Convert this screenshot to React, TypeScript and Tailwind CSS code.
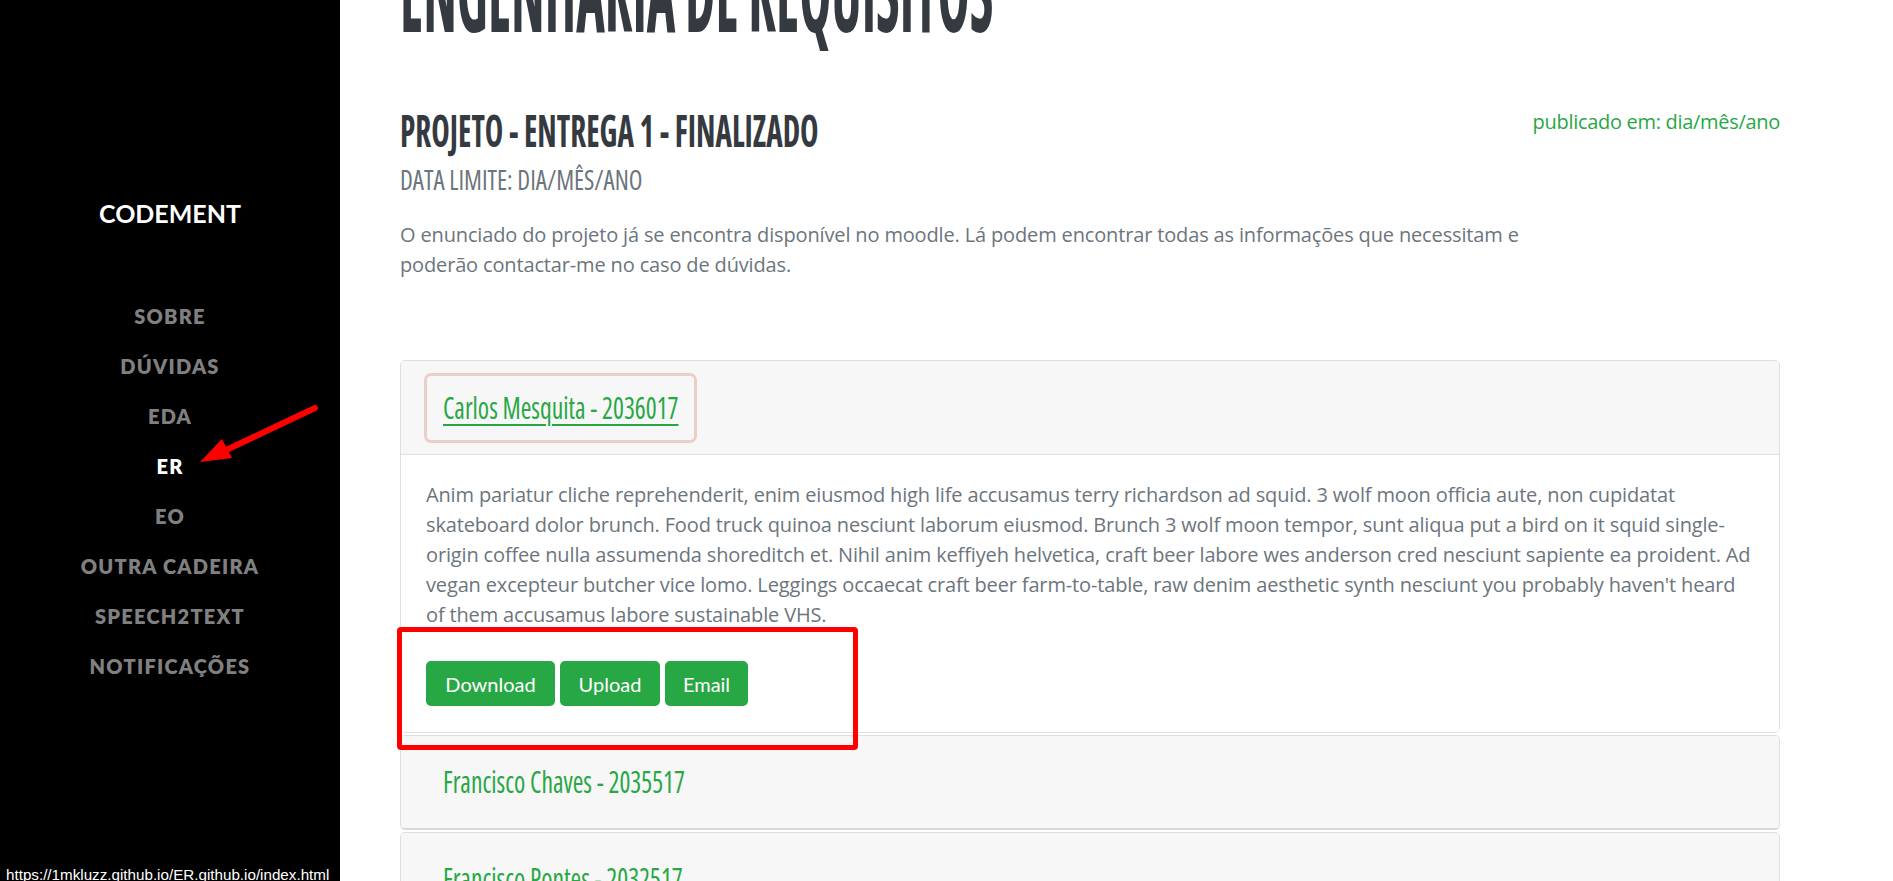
const navItems = [
  'SOBRE',
  'DÚVIDAS',
  'EDA',
  'ER',
  'EO',
  'OUTRA CADEIRA',
  'SPEECH2TEXT',
  'NOTIFICAÇÕES',
];

const introLines = [
  'O enunciado do projeto já se encontra disponível no moodle. Lá podem encontrar todas as informações que necessitam e',
  'poderão contactar-me no caso de dúvidas.',
];

const cardLines = [
  'Anim pariatur cliche reprehenderit, enim eiusmod high life accusamus terry richardson ad squid. 3 wolf moon officia aute, non cupidatat',
  'skateboard dolor brunch. Food truck quinoa nesciunt laborum eiusmod. Brunch 3 wolf moon tempor, sunt aliqua put a bird on it squid single-',
  'origin coffee nulla assumenda shoreditch et. Nihil anim keffiyeh helvetica, craft beer labore wes anderson cred nesciunt sapiente ea proident. Ad',
  "vegan excepteur butcher vice lomo. Leggings occaecat craft beer farm-to-table, raw denim aesthetic synth nesciunt you probably haven't heard",
  'of them accusamus labore sustainable VHS.',
];

function Sidebar() {
  return (
    <aside className="w-[340px] shrink-0 bg-black flex flex-col items-center pt-[194px]">
      <div className="h-[38px] leading-[38px] text-[25px] font-bold text-white">CODEMENT</div>
      <nav className="mt-[59px] flex flex-col items-center">
        {navItems.map((n) => (
          <a
            key={n}
            className={
              n === 'ER'
                ? 'h-[50px] leading-[50px] text-[20px] font-extrabold tracking-[1.25px] text-white'
                : 'h-[50px] leading-[50px] text-[20px] font-extrabold tracking-[1.25px] text-[#808080]'
            }
          >
            {n}
          </a>
        ))}
      </nav>
    </aside>
  );
}

function CardHeaderTitle({ name }: { name: string }) {
  return (
    <span className="inline-block origin-left scale-x-[0.855] whitespace-nowrap font-['Open_Sans',sans-serif] font-stretch-condensed text-[30px] leading-none text-[#28a745]">
      {name}
    </span>
  );
}

function OpenCard() {
  return (
    <div className="border border-[#dfdfdf] rounded-[5px] overflow-hidden">
      <div className="h-[94px] bg-[#f7f7f7] border-b border-[#dfdfdf] px-[23px] flex items-center">
        <div className="w-[273px] h-[70px] border-[3px] border-[#e8d0c6] rounded-[7px] flex items-center pl-[16px]">
          <span className="inline-block origin-left scale-x-[0.855] whitespace-nowrap font-['Open_Sans',sans-serif] font-stretch-condensed text-[30px] leading-none text-[#28a745] underline decoration-2 underline-offset-[5px]">
            Carlos Mesquita - 2036017
          </span>
        </div>
      </div>
      <div className="bg-white px-[25px] pt-[25px] pb-[26px]">
        <p className="font-['Open_Sans',sans-serif] text-[20px] leading-[30px] tracking-[-0.15px] text-[#6c757d]">
          {cardLines.map((l) => (
            <span key={l} className="block whitespace-nowrap">
              {l}
            </span>
          ))}
        </p>
        <div className="mt-[31px] flex gap-[5px]">
          <button className="w-[129px] h-[45px] rounded-[5px] bg-[#28a745] text-white text-[20px] flex items-center justify-center">
            Download
          </button>
          <button className="w-[100px] h-[45px] rounded-[5px] bg-[#28a745] text-white text-[20px] flex items-center justify-center">
            Upload
          </button>
          <button className="w-[83px] h-[45px] rounded-[5px] bg-[#28a745] text-white text-[20px] flex items-center justify-center">
            Email
          </button>
        </div>
      </div>
    </div>
  );
}

function ClosedCard({ name }: { name: string }) {
  return (
    <div className="border border-[#dfdfdf] border-b-2 border-b-[#d8d8d8] rounded-[5px] overflow-hidden">
      <div className="h-[92px] bg-[#f7f7f7] px-[42px] flex items-center">
        <CardHeaderTitle name={name} />
      </div>
    </div>
  );
}

export default function App() {
  return (
    <div className="relative flex h-[881px] w-[1893px] overflow-hidden bg-white font-['Lato',sans-serif]">
      <Sidebar />
      <main className="flex-1">
        <div className="ml-[60px] w-[1380px]">
          <h1 className="-mt-[67px] h-[112px] whitespace-nowrap font-['Open_Sans',sans-serif] font-stretch-condensed text-[112px] leading-none font-bold text-[#343a40]">
            <span className="inline-block origin-left scale-x-[0.484]">ENGENHARIA DE REQUISITOS</span>
          </h1>
          <div className="mt-[62px] flex items-start justify-between">
            <div className="flex-1">
              <h3 className="h-[45px] whitespace-nowrap font-['Open_Sans',sans-serif] font-stretch-condensed text-[45px] leading-none font-bold text-[#343a40]">
                <span className="inline-block origin-left scale-x-[0.694]">PROJETO - ENTREGA 1 - FINALIZADO</span>
              </h3>
              <div className="mt-[13px] h-[28px] whitespace-nowrap font-['Open_Sans',sans-serif] font-stretch-condensed text-[28px] leading-none font-normal text-[#6c757d]">
                <span className="inline-block origin-left scale-x-[0.898]">DATA LIMITE: DIA/MÊS/ANO</span>
              </div>
              <p className="mt-[27px] font-['Open_Sans',sans-serif] text-[20px] leading-[30px] tracking-[-0.15px] text-[#6c757d]">
                {introLines.map((l) => (
                  <span key={l} className="block whitespace-nowrap">
                    {l}
                  </span>
                ))}
              </p>
            </div>
            <span className="shrink-0 font-['Open_Sans',sans-serif] text-[20px] leading-[30px] tracking-[-0.3px] text-[#28a745]">
              publicado em: dia/mês/ano
            </span>
          </div>
          <div className="mt-[80px] flex flex-col gap-[2px]">
            <OpenCard />
            <ClosedCard name="Francisco Chaves - 2035517" />
            <ClosedCard name="Francisco Pontes - 2032517" />
          </div>
        </div>
      </main>

      <div className="pointer-events-none absolute left-[397px] top-[627px] h-[123px] w-[461px] rounded-[4px] border-[5px] border-[#ff0000]" />

      <svg className="pointer-events-none absolute left-0 top-0" width="400" height="500" viewBox="0 0 400 500">
        <line x1="315" y1="408" x2="222" y2="452" stroke="#ff0000" strokeWidth="6" strokeLinecap="round" />
        <polygon points="200,462 232,458 222,439" fill="#ff0000" />
      </svg>

      <div className="pointer-events-none absolute bottom-[-3px] left-0 bg-black pl-[6px] pr-[2px] font-['Liberation_Sans',sans-serif] text-[15.2px] leading-[19px] text-white">
        https://1mkluzz.github.io/ER.github.io/index.html
      </div>
    </div>
  );
}
